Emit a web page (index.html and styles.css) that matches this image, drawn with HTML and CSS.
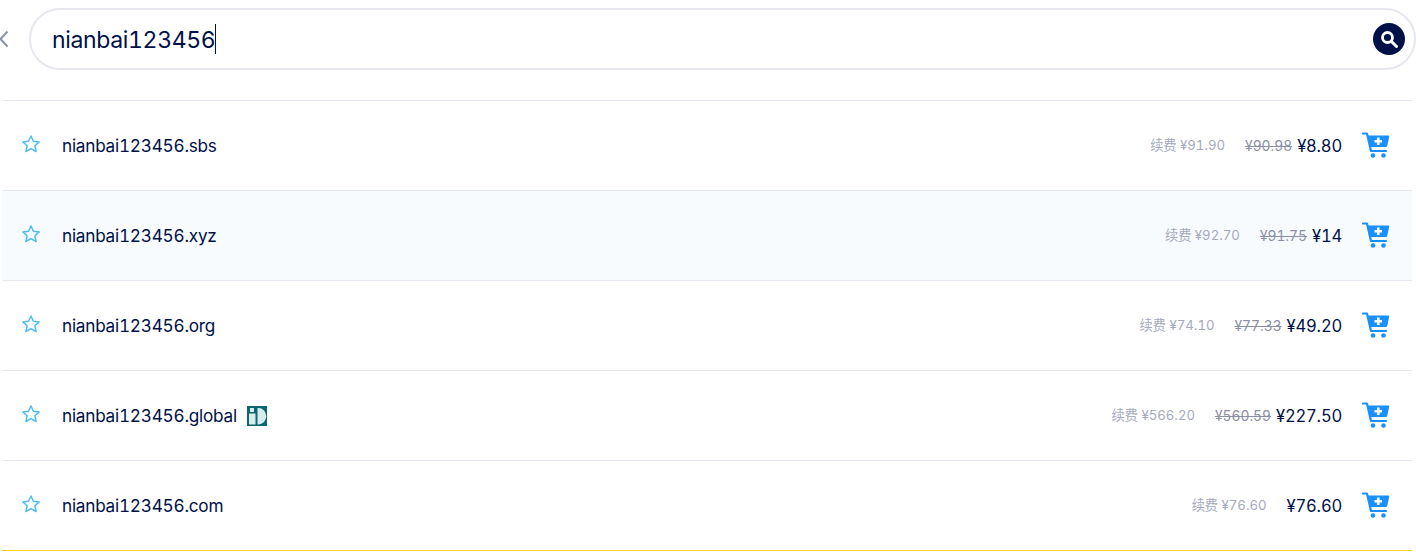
FILE: index.html
```html
<!DOCTYPE html>
<html lang="en">
<head>
    <meta charset="UTF-8">
    <meta name="viewport" content="width=device-width, initial-scale=1.0">
    <title>Domain Search</title>
    <link rel="stylesheet" href="styles.css">
</head>
<body>
    <svg class="sprites" width="0" height="0">
        <symbol id="star" viewBox="0 0 20 20">
            <path d="M10 2l2.400 5.300 5.800.6-4.300 3.900 1.200 5.700L10 14.600 4.900 17.500l1.200-5.700L1.800 7.900l5.800-.6z" fill="none" stroke="#4dbdf0" stroke-width="1.500" stroke-linejoin="round"/>
        </symbol>
        <symbol id="cart" viewBox="0 0 28 26">
            <path d="M1 1.500h4l4 17.500h15" fill="none" stroke="#1890ff" stroke-width="2.200" stroke-linecap="round" stroke-linejoin="round"/>
            <path d="M6 3.500h20.200q1.200 0 1 1.200l-2 9.300q-.2 1-1.200 1H8.500z" fill="#1890ff"/>
            <path d="M15 5.500h2.600V8H20v2.500h-2.400V13H15v-2.500h-2.500V8H15z" fill="#fff"/>
            <circle cx="11" cy="23.500" r="2.300" fill="#1890ff"/>
            <circle cx="21.500" cy="23.500" r="2.300" fill="#1890ff"/>
        </symbol>
    </svg>

    <div class="search-bar">
        <svg class="back" width="10" height="18" viewBox="0 0 10 18"><path d="M8.500 1.500L1.500 9l7 7.500" fill="none" stroke="#8a94a8" stroke-width="2"/></svg>
        <div class="search-box">
            <span class="search-text">nianbai123456</span><span class="caret"></span>
            <button class="search-btn">
                <svg width="20" height="20" viewBox="0 0 20 20"><circle cx="8.500" cy="8.500" r="5" fill="none" stroke="#fff" stroke-width="2.800"/><path d="M12.500 12.500l5 5" stroke="#fff" stroke-width="3" stroke-linecap="round"/></svg>
            </button>
        </div>
    </div>

    <ul class="results">
        <li class="row">
            <svg class="star"><use href="#star"/></svg>
            <span class="domain">nianbai123456.sbs</span>
            <span class="renew">续费 ¥91.90</span>
            <span class="old-price">¥90.98</span>
            <span class="price">¥8.80</span>
            <svg class="cart"><use href="#cart"/></svg>
        </li>
        <li class="row hover">
            <svg class="star"><use href="#star"/></svg>
            <span class="domain">nianbai123456.xyz</span>
            <span class="renew">续费 ¥92.70</span>
            <span class="old-price">¥91.75</span>
            <span class="price">¥14</span>
            <svg class="cart"><use href="#cart"/></svg>
        </li>
        <li class="row">
            <svg class="star"><use href="#star"/></svg>
            <span class="domain">nianbai123456.org</span>
            <span class="renew">续费 ¥74.10</span>
            <span class="old-price">¥77.33</span>
            <span class="price">¥49.20</span>
            <svg class="cart"><use href="#cart"/></svg>
        </li>
        <li class="row">
            <svg class="star"><use href="#star"/></svg>
            <span class="domain">nianbai123456.global</span>
            <svg class="id-badge" width="20" height="20" viewBox="0 0 20 20">
                <rect width="20" height="20" fill="#0b6670"/>
                <rect x="3" y="2" width="4" height="4" fill="#d8ecec"/>
                <rect x="2" y="7.500" width="6.500" height="11" fill="#d8ecec"/>
                <path d="M10.500 2h1a7.500 8 0 0 1 0 16.500h-1z" fill="#d8ecec"/>
            </svg>
            <span class="renew">续费 ¥566.20</span>
            <span class="old-price">¥560.59</span>
            <span class="price">¥227.50</span>
            <svg class="cart"><use href="#cart"/></svg>
        </li>
        <li class="row last">
            <svg class="star"><use href="#star"/></svg>
            <span class="domain">nianbai123456.com</span>
            <span class="renew renew-wide">续费 ¥76.60</span>
            <span class="price">¥76.60</span>
            <svg class="cart"><use href="#cart"/></svg>
        </li>
    </ul>
</body>
</html>
```

FILE: styles.css
```css
html, body {
    margin: 0;
    padding: 0;
    height: 553px;
    overflow: hidden;
    background: #fff;
    font-family: Inter, "Noto Sans CJK SC", sans-serif;
    font-variant-numeric: tabular-nums;
    color: #001148;
}
.sprites {
    display: block;
    height: 0;
}
.search-bar {
    display: flex;
    align-items: center;
    height: 62px;
    padding-top: 8px;
    margin-left: -1px;
    gap: 20px;
}
.back {
    flex: none;
}
.search-box {
    flex: 1;
    box-sizing: border-box;
    height: 62px;
    display: flex;
    align-items: center;
    padding: 0 9px 0 21px;
    border: 2px solid #e6e7ef;
    border-radius: 31px;
}
.search-text {
    font-size: 23px;
    letter-spacing: -.35px;
    padding-top: 2px;
}
.caret {
    width: 1px;
    height: 30px;
    background: #001148;
}
.search-btn {
    margin-left: auto;
    width: 32px;
    height: 32px;
    padding: 0;
    border: none;
    border-radius: 50%;
    background: #001148;
    display: flex;
    align-items: center;
    justify-content: center;
}
.results {
    list-style: none;
    margin: 30px 4px 0 2px;
    padding: 0;
    border-top: 1px solid #e6e7ef;
}
.row {
    box-sizing: border-box;
    height: 90px;
    display: flex;
    align-items: center;
    padding: 0 22px 0 19px;
    border-bottom: 1px solid #e6e7ef;
}
.row.hover {
    background: #f7fbfe;
}
.row.last {
    border-bottom-color: #ffd02b;
}
.star {
    width: 20px;
    height: 20px;
    flex: none;
    margin-right: 21px;
    position: relative;
    top: -2px;
}
.domain {
    font-size: 17.2px;
    letter-spacing: -.24px;
}
.id-badge {
    margin-left: 10px;
}
.renew {
    margin-left: auto;
    font-size: 13.2px;
    color: #a5a9bd;
    position: relative;
    top: -1px;
}
.old-price {
    margin-left: 20px;
    font-size: 13.8px;
    color: #8c90a6;
    text-decoration: line-through;
}
.price {
    margin-left: 5px;
    font-size: 16.6px;
    letter-spacing: -.2px;
}
.renew-wide + .price {
    margin-left: 20px;
}
.cart {
    width: 28px;
    height: 26px;
    flex: none;
    margin-left: 20px;
    position: relative;
    top: -1px;
}
```
